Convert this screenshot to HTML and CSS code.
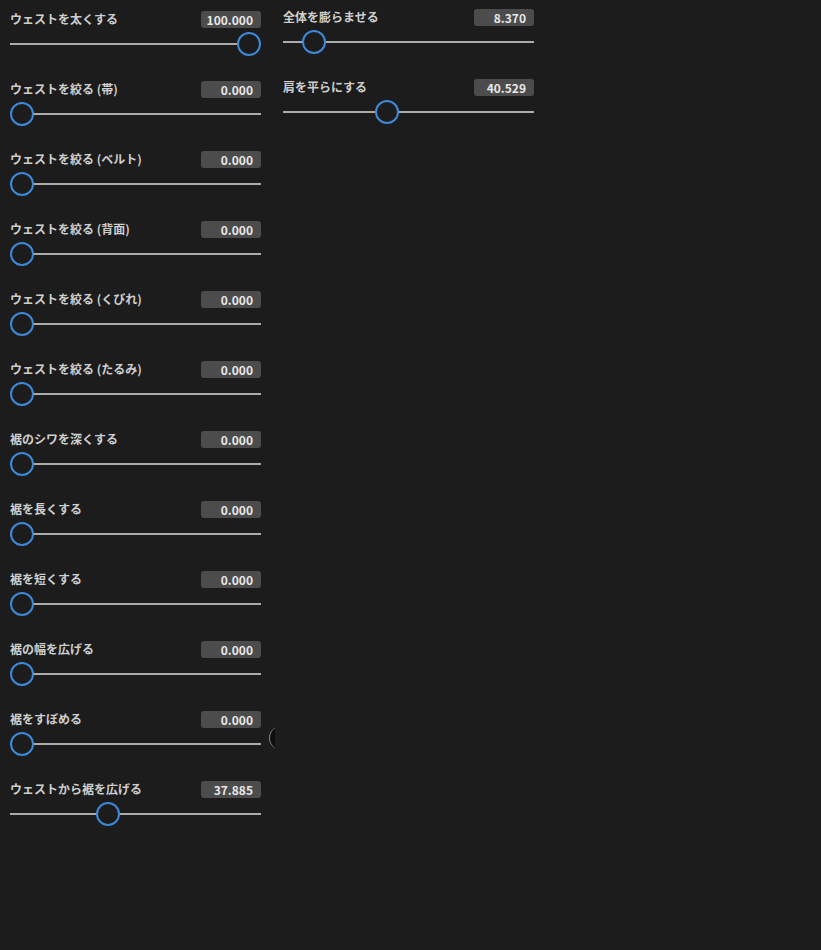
FILE: index.html
```html
<!DOCTYPE html>
<html lang="ja">
<head>
<meta charset="utf-8">
<link rel="stylesheet" href="styles.css">
</head>
<body>
<div class="panel">
  <div class="col col-left">
    <div class="row"><div class="head"><span class="label">ウェストを太くする</span><span class="value">100.000</span></div><div class="slider"><div class="track"></div><div class="thumb" style="left:100%"></div></div></div>
    <div class="row"><div class="head"><span class="label">ウェストを絞る (帯)</span><span class="value">0.000</span></div><div class="slider"><div class="track"></div><div class="thumb" style="left:0%"></div></div></div>
    <div class="row"><div class="head"><span class="label">ウェストを絞る (ベルト)</span><span class="value">0.000</span></div><div class="slider"><div class="track"></div><div class="thumb" style="left:0%"></div></div></div>
    <div class="row"><div class="head"><span class="label">ウェストを絞る (背面)</span><span class="value">0.000</span></div><div class="slider"><div class="track"></div><div class="thumb" style="left:0%"></div></div></div>
    <div class="row"><div class="head"><span class="label">ウェストを絞る (くびれ)</span><span class="value">0.000</span></div><div class="slider"><div class="track"></div><div class="thumb" style="left:0%"></div></div></div>
    <div class="row"><div class="head"><span class="label">ウェストを絞る (たるみ)</span><span class="value">0.000</span></div><div class="slider"><div class="track"></div><div class="thumb" style="left:0%"></div></div></div>
    <div class="row"><div class="head"><span class="label">裾のシワを深くする</span><span class="value">0.000</span></div><div class="slider"><div class="track"></div><div class="thumb" style="left:0%"></div></div></div>
    <div class="row"><div class="head"><span class="label">裾を長くする</span><span class="value">0.000</span></div><div class="slider"><div class="track"></div><div class="thumb" style="left:0%"></div></div></div>
    <div class="row"><div class="head"><span class="label">裾を短くする</span><span class="value">0.000</span></div><div class="slider"><div class="track"></div><div class="thumb" style="left:0%"></div></div></div>
    <div class="row"><div class="head"><span class="label">裾の幅を広げる</span><span class="value">0.000</span></div><div class="slider"><div class="track"></div><div class="thumb" style="left:0%"></div></div></div>
    <div class="row"><div class="head"><span class="label">裾をすぼめる</span><span class="value">0.000</span></div><div class="slider"><div class="track"></div><div class="thumb" style="left:0%"></div><div class="ghost"><div class="ghost-circle"></div></div></div></div>
    <div class="row"><div class="head"><span class="label">ウェストから裾を広げる</span><span class="value">37.885</span></div><div class="slider"><div class="track"></div><div class="thumb" style="left:37.885%"></div></div></div>
  </div>
  <div class="col col-right">
    <div class="row"><div class="head"><span class="label">全体を膨らませる</span><span class="value">8.370</span></div><div class="slider"><div class="track"></div><div class="thumb" style="left:8.37%"></div></div></div>
    <div class="row"><div class="head"><span class="label">肩を平らにする</span><span class="value">40.529</span></div><div class="slider"><div class="track"></div><div class="thumb" style="left:40.529%"></div></div></div>
  </div>
</div>
</body>
</html>
```
FILE: styles.css
```css
html, body {
  margin: 0;
  padding: 0;
  background: #1c1c1c;
  width: 821px;
  height: 950px;
  overflow: hidden;
}
body {
  font-family: "Noto Sans CJK JP", "Noto Sans", sans-serif;
}
.panel {
  display: flex;
  gap: 22px;
  padding-left: 10px;
  align-items: flex-start;
}
.col {
  width: 251px;
  display: flex;
  flex-direction: column;
}
.col-left { padding-top: 10px; }
.col-right { padding-top: 8px; }
.row {
  height: 70px;
  display: flex;
  flex-direction: column;
  gap: 4px;
}
.head {
  height: 18px;
  display: flex;
  align-items: center;
  justify-content: space-between;
}
.label {
  color: #cfcfcf;
  font-size: 12px;
  font-weight: 700;
  line-height: 18px;
}
.value {
  width: 60px;
  height: 17px;
  box-sizing: border-box;
  background: #4c4c4c;
  border-radius: 3px;
  color: #e8e8e8;
  font-size: 12px;
  font-weight: 700;
  line-height: 17px;
  text-align: right;
  padding-right: 8px;
}
.slider {
  position: relative;
  height: 24px;
  margin-right: 24px;
}
.track {
  position: absolute;
  left: 0;
  right: -24px;
  top: 11px;
  height: 2px;
  background: #ababab;
}
.thumb {
  position: absolute;
  top: 0;
  width: 24px;
  height: 24px;
  box-sizing: border-box;
  border: 2px solid #3d88d9;
  border-radius: 50%;
  background: #1c1c1c;
}
.ghost {
  position: absolute;
  left: 259px;
  top: -7px;
  width: 6px;
  height: 26px;
  overflow: hidden;
}
.ghost-circle {
  width: 30px;
  height: 26px;
  box-sizing: border-box;
  border-radius: 50%;
  border-left: 1px solid #8a8a8a;
  background: #0e0e0e;
}
```
